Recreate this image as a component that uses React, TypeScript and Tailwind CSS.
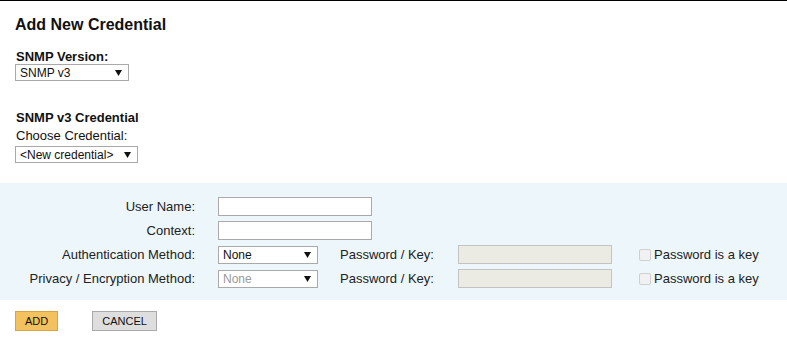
import type { ReactNode } from "react"

function Arrow() {
  return (
    <svg width="7" height="6" viewBox="0 0 7 6" className="shrink-0">
      <polygon points="0,0 7,0 3.5,6" fill="#111" />
    </svg>
  )
}

function FakeSelect({ value, className, disabled }: { value: string; className: string; disabled?: boolean }) {
  return (
    <div
      className={`flex items-center justify-between border border-[#a9a9a9] bg-white pl-[4px] pr-[6px] text-[12px] leading-none ${
        disabled ? "text-[#9a9a9a]" : "text-[#111]"
      } ${className}`}
    >
      <span>{value}</span>
      <Arrow />
    </div>
  )
}

function TextBox({ disabled }: { disabled?: boolean }) {
  return (
    <div
      className={`h-[19px] w-[154px] border ${
        disabled ? "border-[#c3c3c3] bg-[#ebebe4]" : "border-[#a9a9a9] bg-white"
      }`}
    />
  )
}

function Row({ label, children }: { label: string; children: ReactNode }) {
  return (
    <div className="flex h-[19px] items-center">
      <div className="w-[195px] text-right">{label}</div>
      <div className="ml-[23px] flex items-center">{children}</div>
    </div>
  )
}

function KeyFields() {
  return (
    <>
      <div className="ml-[22px] w-[118px]">Password / Key:</div>
      <TextBox disabled />
      <div className="ml-[27px] h-[12px] w-[12px] rounded-[2px] border border-[#cfcfcf] bg-[#f1f1f1]" />
      <div className="ml-[3px]">Password is a key</div>
    </>
  )
}

export default function App() {
  return (
    <div className="min-h-screen border-t border-black bg-white font-['Liberation_Sans',Arial,sans-serif] text-[13px] text-[#222]">
      <div className="px-[15px]">
        <h1 className="pt-[15px] text-[16px] font-bold leading-[18px] text-[#111]">Add New Credential</h1>

        <div className="mt-[16px] pl-px font-bold leading-[14px] text-[#111]">SNMP Version:</div>
        <FakeSelect value="SNMP v3" className="h-[17px] w-[114px]" />

        <div className="mt-[30px] pl-px font-bold leading-[14px] text-[#111]">SNMP v3 Credential</div>
        <div className="mt-[4px] pl-px leading-[14px] text-[#111]">Choose Credential:</div>
        <FakeSelect value="<New credential>" className="mt-[3px] h-[17px] w-[123px]" />
      </div>

      <div className="mt-[20px] flex h-[117px] flex-col gap-[5px] bg-[#edf6fa] pt-[14px]">
        <Row label="User Name:">
          <TextBox />
        </Row>
        <Row label="Context:">
          <TextBox />
        </Row>
        <Row label="Authentication Method:">
          <FakeSelect value="None" className="h-[18px] w-[100px]" />
          <KeyFields />
        </Row>
        <Row label="Privacy / Encryption Method:">
          <FakeSelect value="None" className="h-[18px] w-[100px]" disabled />
          <KeyFields />
        </Row>
      </div>

      <div className="mt-[11px] flex px-[15px]">
        <button className="h-[20px] border border-[#d6a444] bg-[#f3c15d] px-[9px] text-[11px] leading-none text-[#111]">
          ADD
        </button>
        <button className="ml-[34px] h-[20px] border border-[#aaaaaa] bg-[#dedede] px-[9px] text-[11px] leading-none text-[#111]">
          CANCEL
        </button>
      </div>
    </div>
  )
}
